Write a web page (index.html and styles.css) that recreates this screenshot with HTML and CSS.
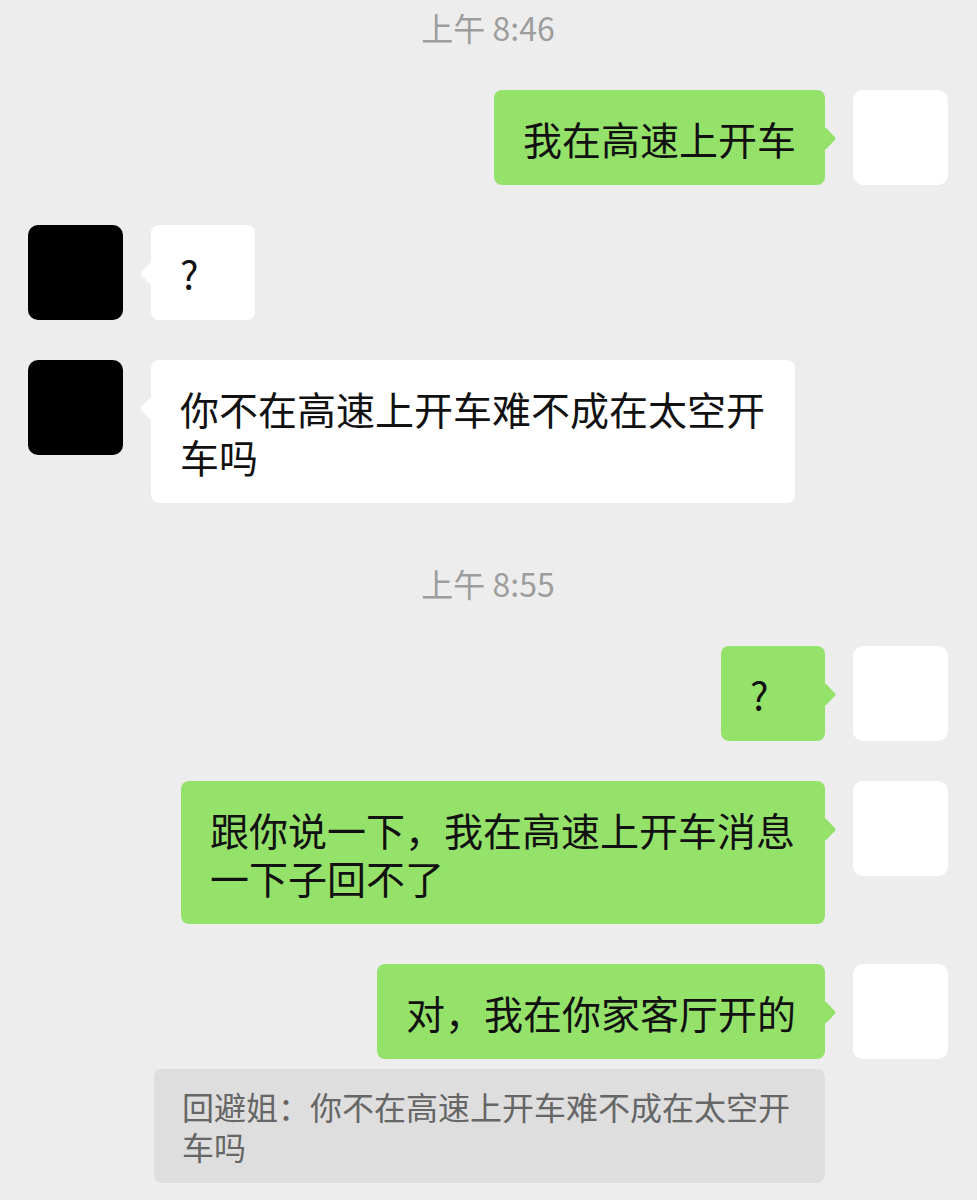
FILE: index.html
```html
<!DOCTYPE html>
<html lang="zh-CN">
<head>
  <meta charset="UTF-8" />
  <title>聊天</title>
  <link rel="stylesheet" href="styles.css">
</head>
<body>

  <div class="chat">
    <div class="time">上午 8:46</div>

    <div class="row me">
      <div class="bubble">我在高速上开车</div>
      <div class="avatar"></div>
    </div>

    <div class="row other">
      <div class="avatar"></div>
      <div class="bubble short">?</div>
    </div>

    <div class="row other">
      <div class="avatar"></div>
      <div class="bubble">你不在高速上开车难不成在太空开车吗</div>
    </div>

    <div class="time later">上午 8:55</div>

    <div class="row me">
      <div class="bubble short">?</div>
      <div class="avatar"></div>
    </div>

    <div class="row me">
      <div class="bubble">跟你说一下，我在高速上开车消息一下子回不了</div>
      <div class="avatar"></div>
    </div>

    <div class="row me">
      <div class="bubble">对，我在你家客厅开的</div>
      <div class="avatar"></div>
    </div>

    <div class="quote">回避姐：你不在高速上开车难不成在太空开车吗</div>
  </div>

</body>
</html>
```

FILE: styles.css
```css
body {
  margin: 0;
  background-color: #ededed;
  font-family: "Noto Sans CJK SC", "Noto Sans", sans-serif;
  color: #111;
}

.chat {
  display: flex;
  flex-direction: column;
  padding: 7px 29px 0 28px;
}

.time {
  text-align: center;
  font-size: 32px;
  line-height: 40px;
  color: #9d9d9d;
  margin-bottom: 43px;
}

.time.later {
  margin-top: 60px;
  margin-bottom: 43px;
}

.row {
  display: flex;
  align-items: flex-start;
  gap: 28px;
}

.row + .row {
  margin-top: 40px;
}

.row.me {
  justify-content: flex-end;
}

.avatar {
  flex: none;
  width: 95px;
  height: 95px;
  border-radius: 10px;
  background-color: #fff;
}

.other .avatar {
  background-color: #000;
}

.bubble {
  position: relative;
  box-sizing: border-box;
  max-width: 644px;
  padding: 23.5px 29px;
  font-size: 39px;
  line-height: 48px;
  border-radius: 8px;
  background-color: #fff;
}

.me .bubble {
  background-color: #95e26b;
}

.bubble.short {
  min-width: 104px;
}

/* little tail pointing at the avatar */
.bubble::before {
  content: "";
  position: absolute;
  top: 40px;
  width: 17px;
  height: 17px;
  border-radius: 3px;
  background-color: inherit;
  transform: rotate(45deg);
}

.other .bubble::before {
  left: -8px;
}

.me .bubble::before {
  right: -8px;
}

.quote {
  align-self: flex-end;
  box-sizing: border-box;
  max-width: 671px;
  margin: 10px 123px 0 0;
  padding: 17px 28px;
  font-size: 32px;
  line-height: 40px;
  color: #666;
  border-radius: 8px;
  background-color: #dedede;
}
```
